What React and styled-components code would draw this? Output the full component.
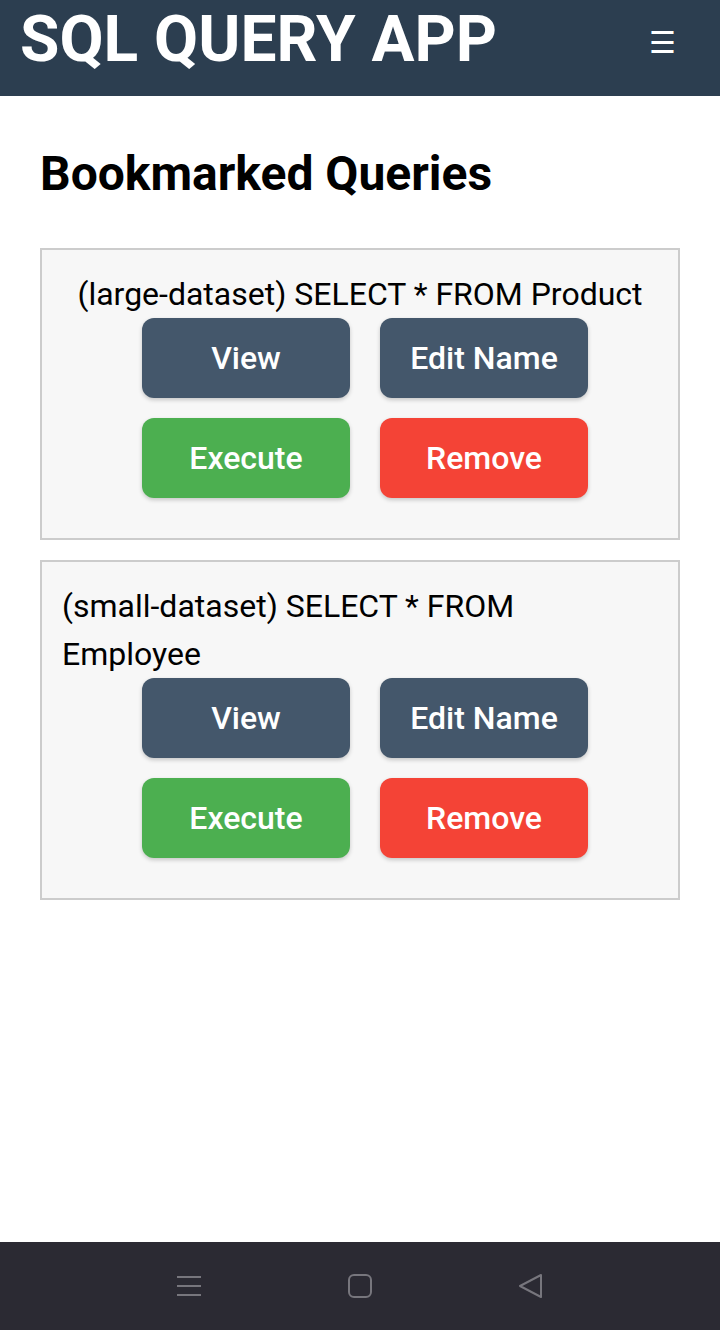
import React from "react";
import styled, { createGlobalStyle } from "styled-components";

const Global = createGlobalStyle`
  html, body { margin: 0; padding: 0; background: #fff; }
  body { font-family: Roboto, "Noto Sans", "Liberation Sans", sans-serif; }
  * { box-sizing: border-box; }
`;

const Page = styled.div`
  width: 720px;
  height: 1330px;
  display: flex;
  flex-direction: column;
  overflow: hidden;
`;

const Header = styled.header`
  height: 96px;
  background: #2c3e50;
  display: flex;
  align-items: flex-start;
  justify-content: space-between;
  padding: 0 44px 0 20px;
  flex-shrink: 0;
`;

const Brand = styled.h1`
  margin: 0;
  color: #fff;
  font-size: 64px;
  font-weight: 700;
  line-height: 80px;
`;

const MenuButton = styled.div`
  color: #fff;
  font-size: 30px;
  line-height: 86px;
`;

const Main = styled.main`
  flex: 1;
  padding: 0 40px;
`;

const Title = styled.h2`
  margin: 48px 0 44px;
  font-size: 48px;
  font-weight: 700;
  line-height: 60px;
  color: #000;
`;

const Card = styled.section`
  background: #f7f7f7;
  border: 2px solid #cccccc;
  padding: 20px 20px 40px;
  margin-bottom: 20px;
  display: flex;
  flex-direction: column;
  align-items: ${(p) => (p.$center ? "center" : "flex-start")};
`;

const QueryText = styled.div`
  font-size: 32px;
  line-height: 48px;
  color: #000;
`;

const ButtonGrid = styled.div`
  align-self: stretch;
  display: grid;
  grid-template-columns: 208px 208px;
  column-gap: 30px;
  row-gap: 20px;
  justify-content: center;
  padding-left: 10px;
`;

const colors = {
  dark: "#44576b",
  green: "#4caf50",
  red: "#f44336",
};

const Button = styled.button`
  height: 80px;
  border: none;
  border-radius: 12px;
  background: ${(p) => colors[p.$variant]};
  color: #fff;
  font-family: Roboto, "Noto Sans", sans-serif;
  font-size: 32px;
  font-weight: 500;
  box-shadow: 0 2px 4px rgba(0, 0, 0, 0.2);
  cursor: pointer;
`;

const NavBar = styled.nav`
  height: 88px;
  background: #2b2a33;
  display: flex;
  align-items: center;
  justify-content: space-between;
  padding: 0 176px;
  flex-shrink: 0;
`;

const NavIcon = styled.svg`
  width: 26px;
  height: 26px;
  display: block;
`;

const queries = [
  { text: "(large-dataset) SELECT * FROM Product", center: true },
  { text: "(small-dataset) SELECT * FROM Employee", center: false },
];

export default function App() {
  return (
    <Page>
      <Global />
      <Header>
        <Brand>SQL QUERY APP</Brand>
        <MenuButton>☰</MenuButton>
      </Header>
      <Main>
        <Title>Bookmarked Queries</Title>
        {queries.map((q) => (
          <Card key={q.text} $center={q.center}>
            <QueryText>{q.text}</QueryText>
            <ButtonGrid>
              <Button $variant="dark">View</Button>
              <Button $variant="dark">Edit Name</Button>
              <Button $variant="green">Execute</Button>
              <Button $variant="red">Remove</Button>
            </ButtonGrid>
          </Card>
        ))}
      </Main>
      <NavBar>
        <NavIcon viewBox="0 0 26 26" fill="none" stroke="#77767d" strokeWidth="2">
          <path d="M1 4h24M1 13h24M1 22h24" />
        </NavIcon>
        <NavIcon viewBox="0 0 26 26" fill="none" stroke="#77767d" strokeWidth="2">
          <rect x="2" y="2" width="22" height="22" rx="5" />
        </NavIcon>
        <NavIcon viewBox="0 0 26 26" fill="none" stroke="#77767d" strokeWidth="2" strokeLinejoin="round">
          <path d="M23 2 L2 13 L23 24 Z" />
        </NavIcon>
      </NavBar>
    </Page>
  );
}
